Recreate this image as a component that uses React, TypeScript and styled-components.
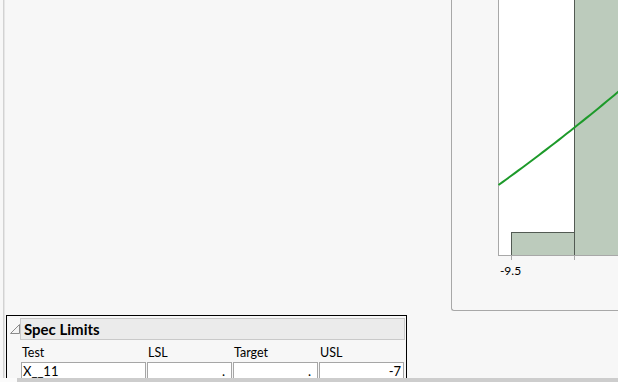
import React from "react";
import styled, { createGlobalStyle } from "styled-components";

const Global = createGlobalStyle`
  html, body { margin: 0; padding: 0; background: #f7f7f7; }
  * { box-sizing: border-box; }
`;

const Page = styled.div`
  width: 618px;
  height: 382px;
  overflow: hidden;
  display: flex;
  flex-direction: column;
  background: #f7f7f7;
  font-family: Lato, "Liberation Sans", sans-serif;
`;

const Main = styled.div`
  display: flex;
  height: 378px;
  overflow: hidden;
`;

const Gutter = styled.div`
  width: 6px;
  flex: none;
  padding-left: 3px;
`;

const Rule = styled.div`
  width: 2px;
  height: 100%;
  border-left: 1px solid #d2d2d2;
  background: #e6e6e6;
`;

const Content = styled.div`
  flex: 1;
  display: flex;
  flex-direction: column;
  min-width: 0;
`;

const ChartArea = styled.div`
  height: 315px;
  flex: none;
  padding-left: 445px;
`;

const Frame = styled.div`
  height: 311px;
  border-left: 1px solid #a8a8a8;
  border-bottom: 1px solid #a8a8a8;
  border-bottom-left-radius: 3px;
  overflow: hidden;
`;

const Panel = styled.div`
  width: 401px;
  height: 80px;
  flex: none;
  border: 1px solid #000;
  padding: 2px 1px 0 0;
`;

const HeaderRow = styled.div`
  display: flex;
  align-items: center;
`;

const Toggle = styled.div`
  width: 13px;
  flex: none;
  display: flex;
  justify-content: center;
  padding-left: 3px;
`;

const HeaderBox = styled.div`
  flex: 1;
  height: 22px;
  background: #ebebeb;
  border: 1px solid #c9c9c9;
  display: flex;
  align-items: center;
  padding-left: 3px;
  font-weight: 700;
  font-size: 15px;
  color: #000;
`;

const Fields = styled.div`
  display: grid;
  grid-template-columns: 125px 85px 85px 85px;
  column-gap: 1px;
  padding-left: 14px;
  margin-top: 5px;
`;

const Label = styled.div`
  font-size: 12.5px;
  line-height: 16px;
  color: #000;
  padding-left: 1px;
  margin-bottom: 1px;
`;

const Field = styled.div<{ $align?: "left" | "right"; $pr?: number }>`
  height: 20px;
  background: #fff;
  border: 1px solid #a6a6a6;
  font-size: 13px;
  line-height: 17px;
  color: #000;
  text-align: ${(p) => p.$align ?? "left"};
  padding: 0 ${(p) => p.$pr ?? 2}px 0 1px;
  white-space: nowrap;
`;

const BottomBar = styled.div`
  display: flex;
  height: 4px;
  flex: none;
`;

const Corner = styled.div`
  width: 17px;
  background: #fbfbfb;
`;

const Track = styled.div`
  flex: 1;
  background: #cdcdcd;
`;

function curvePath() {
  const pts: string[] = [];
  for (let x = 46.5; x <= 172; x += 4) {
    const u = x - 46.5;
    const y = 185 - 0.7187 * u - 0.000498 * u * u;
    pts.push(`${x.toFixed(1)},${y.toFixed(2)}`);
  }
  return "M" + pts.join(" L");
}

const Chart = () => (
  <svg width={172} height={310} style={{ display: "block" }}>
    <rect x={47} y={0} width={130} height={255} fill="#fff" />
    <rect x={59.5} y={232.5} width={63} height={23} fill="#bccbbc" stroke="#525a53" />
    <rect x={122.5} y={-5} width={60} height={260.5} fill="#bccbbc" stroke="#525a53" />
    <line x1={46.5} y1={0} x2={46.5} y2={256} stroke="#a8a8a8" />
    <line x1={46} y1={255.5} x2={172} y2={255.5} stroke="#a8a8a8" />
    <line x1={59.5} y1={256} x2={59.5} y2={260} stroke="#a8a8a8" />
    <line x1={122.5} y1={256} x2={122.5} y2={260} stroke="#a8a8a8" />
    <path d={curvePath()} fill="none" stroke="#1d9a2a" strokeWidth={2} />
    <text x={58.5} y={275} textAnchor="middle" fontSize={12} fontFamily="Lato, sans-serif" fill="#000">
      -9.5
    </text>
  </svg>
);

const Triangle = () => (
  <svg width={10} height={10} viewBox="0 0 10 10">
    <polygon points="0.5,9.5 9.5,0.5 9.5,9.5" fill="#f4f4f4" stroke="#8a8a8a" />
  </svg>
);

export default function App() {
  return (
    <>
      <Global />
      <Page>
        <Main>
          <Gutter>
            <Rule />
          </Gutter>
          <Content>
            <ChartArea>
              <Frame>
                <Chart />
              </Frame>
            </ChartArea>
            <Panel>
              <HeaderRow>
                <Toggle>
                  <Triangle />
                </Toggle>
                <HeaderBox>Spec Limits</HeaderBox>
              </HeaderRow>
              <Fields>
                <Label>Test</Label>
                <Label>LSL</Label>
                <Label>Target</Label>
                <Label>USL</Label>
                <Field>X__11</Field>
                <Field $align="right" $pr={6}>.</Field>
                <Field $align="right" $pr={6}>.</Field>
                <Field $align="right" $pr={2}>-7</Field>
              </Fields>
            </Panel>
          </Content>
        </Main>
        <BottomBar>
          <Corner />
          <Track />
        </BottomBar>
      </Page>
    </>
  );
}
